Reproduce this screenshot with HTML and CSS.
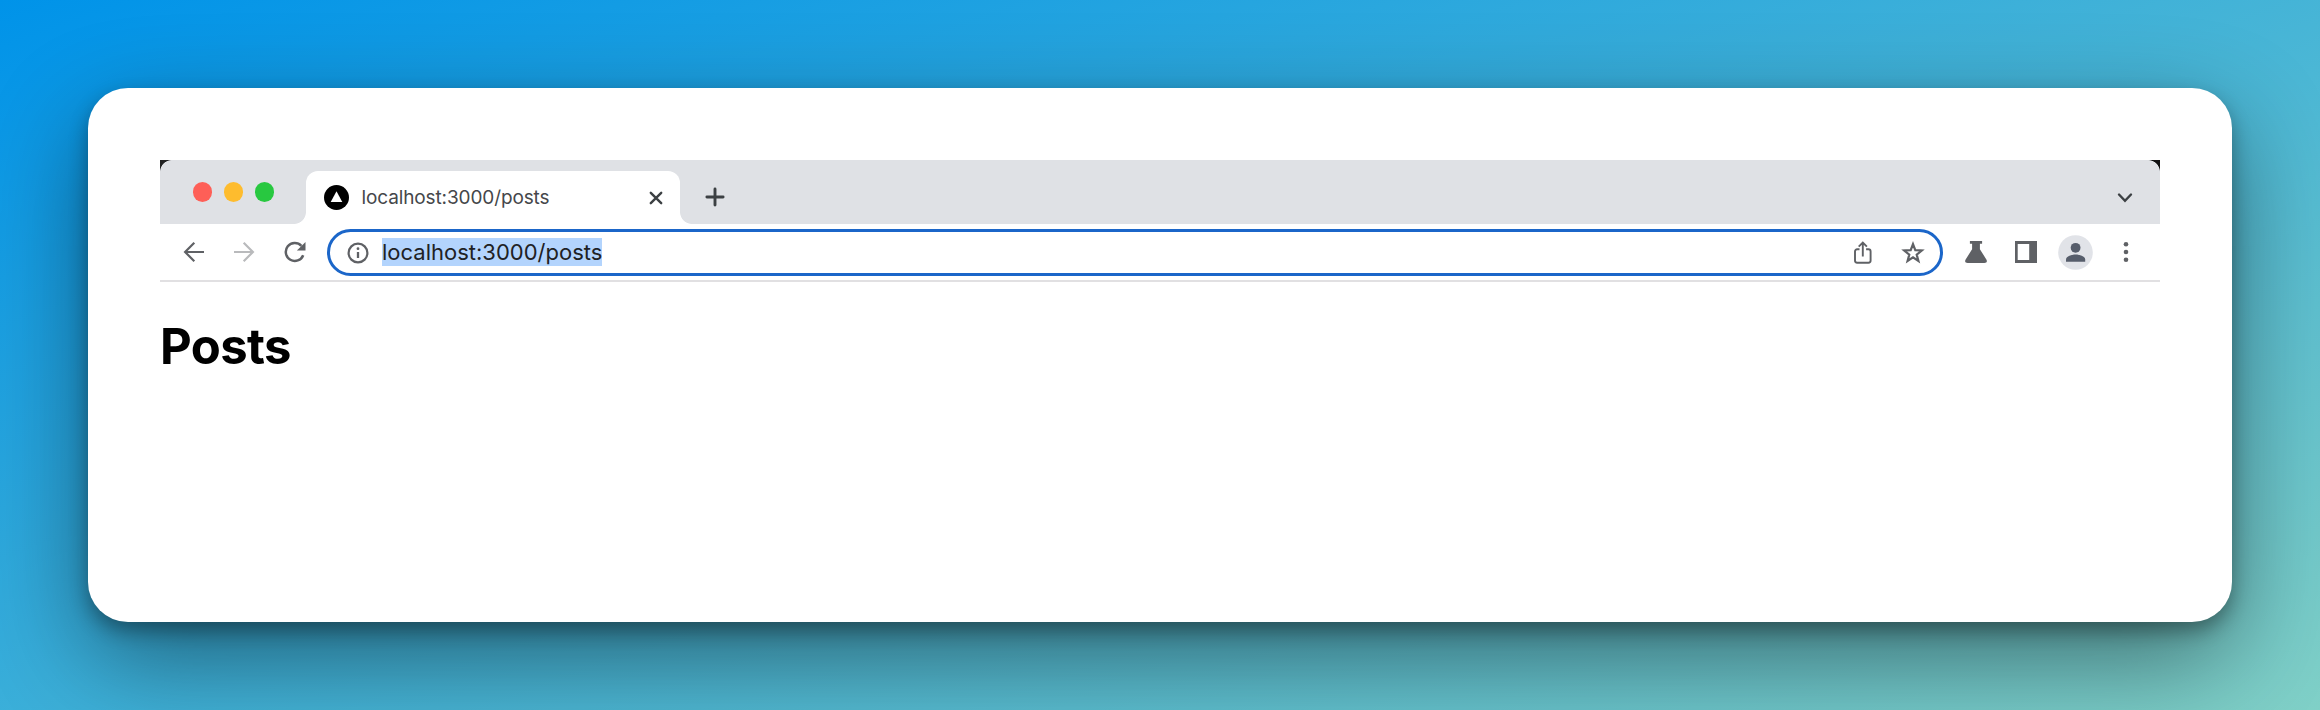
FILE: index.html
```html
<!DOCTYPE html>
<html lang="en">
<head>
<meta charset="utf-8">
<title>localhost:3000/posts</title>
<link rel="stylesheet" href="styles.css">
</head>
<body>
<main class="card">
  <div class="window">
    <div class="tabstrip">
      <div class="lights">
        <span class="light red"></span><span class="light yellow"></span><span class="light green"></span>
      </div>
      <div class="tab">
        <svg class="favicon" width="25" height="25" viewBox="0 0 25 25"><circle cx="12.5" cy="12.5" r="12.5"/><path d="M12.5 6.2 18.3 17H6.7Z" fill="#fff"/></svg>
        <span class="tab-title"><span>localhost:3000/posts</span></span>
        <svg class="close" width="14" height="14" viewBox="0 0 14 14"><path d="M1.8 1.8 12.2 12.2M12.2 1.8 1.8 12.2"/></svg>
      </div>
      <svg class="plus" width="20" height="20" viewBox="0 0 20 20"><path d="M10 1.9V18.1M1.9 10H18.1"/></svg>
      <svg class="chevron" width="16" height="12" viewBox="0 0 16 12"><path d="M2 2.5 8 8.8 14 2.5"/></svg>
    </div>
    <div class="toolbar">
      <div class="nav">
        <svg class="line" width="22" height="22" viewBox="0 0 22 22"><path d="M21 11H2.2M11.3 1.8 2.1 11 11.3 20.2"/></svg>
        <svg class="line pale" width="22" height="22" viewBox="0 0 22 22"><path d="M1 11H19.8M10.7 1.8 19.9 11 10.7 20.2"/></svg>
        <svg class="line" width="24" height="24" viewBox="0 0 24 24"><path d="M20.2 15.2A9 9 0 1 1 18.4 5.8" stroke-width="2.5"/><path class="solid" d="M22.5 2V10.6H13.9Z"/></svg>
      </div>
      <div class="omnibox">
        <svg class="line info" width="22" height="22" viewBox="0 0 22 22"><circle cx="11" cy="11" r="9.4"/><path d="M11 10V16" stroke-width="2.3"/><circle class="solid" cx="11" cy="6.7" r="1.4"/></svg>
        <span class="url"><span>localhost:3000/posts</span></span>
        <svg class="line share" width="20" height="24" viewBox="0 0 20 24"><path d="M6.5 8.2H4.2A2.2 2.2 0 0 0 2 10.4V19.6A2.2 2.2 0 0 0 4.2 21.8H15.4A2.2 2.2 0 0 0 17.6 19.6V10.4A2.2 2.2 0 0 0 15.4 8.2H13.1M9.8 15.6V2M5.7 5.6 9.8 1.6 13.9 5.6" stroke-width="1.9"/></svg>
        <svg class="star" width="24" height="24" viewBox="0 0 24 24"><path d="M12 3.1 14.3 9.2 20.8 9.5 15.7 13.6 17.4 19.9 12 16.3 6.6 19.9 8.3 13.6 3.2 9.5 9.7 9.2Z"/></svg>
      </div>
      <svg class="flask" width="22" height="22" viewBox="0 0 22 22"><path class="solid" d="M4.9 0H17.1V2.7H14.9V8.2L21.5 18.7Q23 22 19.4 22H2.6Q-1 22 .5 18.7L7.1 8.2V2.7H4.9Z"/></svg>
      <svg class="panel" width="22" height="22" viewBox="0 0 22 22"><path class="solid" fill-rule="evenodd" d="M0 0H22V22H0ZM2.7 2.9V19.1H14.2V2.9Z"/></svg>
      <svg class="avatar" width="35" height="35" viewBox="0 0 35 35"><circle cx="17.5" cy="17.5" r="17.3" fill="#e1e3e8"/><circle cx="17.6" cy="12.8" r="4.9"/><path d="M8 26.7V24.4C8 21.2 14 19.4 17.6 19.4S27.2 21.2 27.2 24.4V26.7Z"/></svg>
      <svg class="dots" width="6" height="22" viewBox="0 0 6 22"><circle class="solid" cx="3" cy="3.2" r="2.3"/><circle class="solid" cx="3" cy="11" r="2.3"/><circle class="solid" cx="3" cy="18.8" r="2.3"/></svg>
    </div>
    <h1 class="heading">Posts</h1>
  </div>
</main>
</body>
</html>
```
FILE: styles.css
```css
* { box-sizing: border-box; }
body {
  margin: 0;
  height: 710px;
  padding: 88px;
  overflow: hidden;
  background: linear-gradient(160deg, #0093e9 0%, #80d0c7 100%);
  font-family: Inter, "Liberation Sans", sans-serif;
}
svg { display: block; flex: none; }
.card {
  height: 534px;
  padding: 72px;
  border-radius: 40px;
  background: #fff;
  box-shadow: 0 36px 100px rgba(0, 0, 0, .45), 0 9px 19px rgba(0, 0, 0, .33);
}
.window { width: 2000px; }
.tabstrip {
  display: flex;
  height: 64px;
  background: radial-gradient(circle at 12px 12px, #dfe1e5 11.5px, #222 12.3px) left top / 12px 12px no-repeat,
    radial-gradient(circle at 0 12px, #dfe1e5 11.5px, #111 12.3px) right top / 12px 12px no-repeat,
    #dfe1e5;
}
.lights { display: flex; gap: 11.7px; width: 145.5px; padding: 22px 0 0 32.5px; }
.light { flex: none; width: 19.5px; height: 19.5px; border-radius: 50%; }
.red { background: #fe5f57; }
.yellow { background: #febc2e; }
.green { background: #28c840; }
.tab {
  position: relative;
  display: flex;
  align-items: center;
  width: 374.5px;
  height: 53px;
  margin-top: 11px;
  padding: 0 17.5px 0 18.5px;
  border-radius: 12px 12px 0 0;
  background: #fff;
}
/* concave feet where the tab meets the toolbar */
.tab::before, .tab::after {
  content: "";
  position: absolute;
  bottom: 0;
  width: 12px;
  height: 12px;
}
.tab::before { left: -12px; background: radial-gradient(circle at 0 0, transparent 11.5px, #fff 12.3px); }
.tab::after { right: -12px; background: radial-gradient(circle at 12px 0, transparent 11.5px, #fff 12.3px); }
.tab-title {
  flex: 1;
  margin-left: 12.5px;
  color: #45474a;
  font-size: 19px;
  letter-spacing: -.12px;
  line-height: 24px;
}
.close, .plus, .chevron { fill: none; stroke: #3c4043; stroke-width: 2.4; stroke-linecap: round; }
.plus { margin: 27px 0 0 24.5px; stroke-width: 2.9; }
.chevron { margin: 32px 27px 0 auto; }
.toolbar {
  display: flex;
  align-items: center;
  height: 58px;
  padding: 0 31.5px 0 23px;
  border-bottom: 2px solid #e1e0e2;
}
.line { fill: none; stroke: #5f6165; stroke-width: 2.2; }
.pale { stroke: #b9babc; }
.solid { fill: #5f6165; stroke: none; }
.nav { display: flex; align-items: center; width: 144px; gap: 28px; }
.omnibox {
  display: flex;
  align-items: center;
  width: 1616px;
  height: 47px;
  margin-top: 1px;
  padding: 0 15px 0 16.5px;
  border: 3px solid #1b66c9;
  border-radius: 24px;
}
.url {
  flex: 1;
  margin: 0 0 1px 13.5px;
  color: #202124;
  font-size: 22px;
  line-height: 28px;
}
.url span { display: block; width: max-content; height: 28px; background: #b3d4fd; }
.share { margin-right: 28px; }
.star { fill: none; stroke: #5f6165; stroke-width: 2.2; }
.flask { margin-left: 21.5px; }
.panel { margin-left: 28px; }
.avatar { margin-left: 21.5px; fill: #565d6b; }
.dots { margin-left: auto; }
.heading {
  margin: 36px 0 0;
  font-size: 49px;
  font-weight: 700;
  letter-spacing: -.6px;
  line-height: 58px;
  color: #000;
}
```
